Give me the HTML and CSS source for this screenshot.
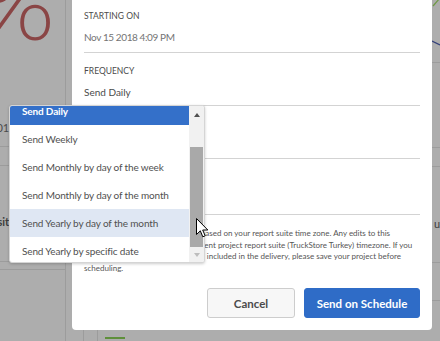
FILE: index.html
```html
<!DOCTYPE html>
<html lang="en">
<head>
    <meta charset="UTF-8">
    <title>Schedule project</title>
    <link rel="stylesheet" href="styles.css">
</head>
<body>

    <!-- page behind the dialog -->
    <div class="backdrop">
        <div class="bg-left">
            <div class="bg-block bg-block-top">
                <div class="bg-percent">%</div>
                <div class="bg-year">2018</div>
            </div>
            <div class="bg-block bg-block-thin"></div>
            <div class="bg-block bg-block-mid">
                <div class="bg-label">Visits</div>
            </div>
            <div class="bg-block bg-block-low"></div>
        </div>
        <div class="bg-main">
            <div class="bg-main-fill"></div>
            <div class="bg-main-foot">
                <div class="bg-col"></div>
                <div class="bg-col"><span class="bg-green"></span></div>
            </div>
        </div>
        <div class="bg-right">
            <div class="bg-chart">
                <svg width="8" height="62" viewBox="0 0 8 62">
                    <path d="M1 6 L8 -2" stroke="#6f9a45" stroke-width="1.2" fill="none"/>
                    <path d="M0 41 L8 45" stroke="#34407a" stroke-width="1.2" fill="none"/>
                </svg>
            </div>
            <div class="bg-cell bg-cell-a"></div>
            <div class="bg-cell bg-cell-b"></div>
            <div class="bg-cell bg-cell-c"><span>ue</span></div>
            <div class="bg-cell bg-cell-d"></div>
        </div>
    </div>

    <!-- dialog -->
    <div class="modal">
        <div class="section">
            <div class="label">Starting on</div>
            <div class="value muted">Nov 15 2018 4:09 PM</div>
        </div>
        <div class="section">
            <div class="label">Frequency</div>
            <div class="value">Send Daily</div>
        </div>
        <div class="section">
            <div class="label">Ending on</div>
            <div class="value">Never</div>
        </div>
        <div class="section section-tall">
            <div class="label">File type</div>
            <div class="value">PDF</div>
        </div>
        <p class="note">
            The scheduled delivery times are based on your report suite time zone. Any edits to this<br>
            schedule times will reflect the current project report suite (TruckStore Turkey) timezone. If you<br>
            want all of your newest edits to be included in the delivery, please save your project before<br>
            scheduling.
        </p>
        <div class="actions">
            <button class="btn btn-cancel">Cancel</button>
            <button class="btn btn-primary">Send on Schedule</button>
        </div>
    </div>

    <!-- open frequency menu -->
    <div class="dropdown">
        <ul class="options">
            <li class="option selected">Send Daily</li>
            <li class="option">Send Weekly</li>
            <li class="option">Send Monthly by day of the week</li>
            <li class="option">Send Monthly by day of the month</li>
            <li class="option hovered">Send Yearly by day of the month</li>
            <li class="option">Send Yearly by specific date</li>
        </ul>
        <div class="scrollbar">
            <div class="scroll-btn scroll-up"><span class="arrow-up"></span></div>
            <div class="scroll-track"><div class="scroll-thumb"></div></div>
            <div class="scroll-btn scroll-down"><span class="arrow-down"></span></div>
        </div>
    </div>

    <svg class="cursor" width="13" height="21" viewBox="0 0 13 21">
        <path d="M0.5 0.5 L0.5 16.5 L4.3 12.8 L6.8 18.8 L9.2 17.8 L6.7 12 L11.8 12 Z" fill="#fff" stroke="#000" stroke-width="1" stroke-linejoin="round"/>
    </svg>

</body>
</html>
```

FILE: styles.css
```css
/* base */
body {
    margin: 0;
    width: 440px;
    height: 341px;
    overflow: hidden;
    position: relative;
    background: #adadad;
    font-family: Lato, "Open Sans", sans-serif;
}

/* page behind the dialog */
.backdrop {
    display: flex;
    height: 341px;
}

.bg-left {
    width: 65px;
    border-right: 1px solid #9c9c9c;
    display: flex;
    flex-direction: column;
}

.bg-block {
    border-bottom: 1px solid #9c9c9c;
    overflow: hidden;
}

.bg-block-top {
    height: 146px;
}

.bg-percent {
    height: 100px;
    margin: -49px 0 0 -23px;
    font-size: 100px;
    font-weight: 300;
    line-height: 100px;
    color: #8a4545;
}

.bg-year {
    margin: 70px 0 0 -10px;
    font-size: 11px;
    color: #4a4a4a;
}

.bg-block-thin {
    height: 18px;
}

.bg-block-mid {
    height: 95px;
}

.bg-label {
    margin: 49px 0 0 -13px;
    font-size: 11px;
    font-weight: bold;
    color: #3d3d3d;
}

.bg-block-low {
    margin-top: 7px;
    border-top: 1px solid #9c9c9c;
    border-bottom: none;
    flex: 1;
}

.bg-main {
    flex: 1;
    display: flex;
    flex-direction: column;
}

.bg-main-fill {
    flex: 1;
}

.bg-main-foot {
    height: 11px;
    display: flex;
    padding-left: 17px;
}

.bg-col {
    width: 13px;
    border-left: 1px solid #9c9c9c;
}

.bg-green {
    display: block;
    width: 20px;
    height: 2px;
    margin: 7px 0 0 7px;
    background: #5e8f3a;
}

.bg-right {
    width: 8px;
    display: flex;
    flex-direction: column;
}

.bg-chart {
    height: 62px;
    border-bottom: 1px solid #9c9c9c;
}

.bg-chart svg {
    display: block;
}

.bg-cell {
    border-bottom: 1px solid #9c9c9c;
    overflow: hidden;
}

.bg-cell-a {
    height: 84px;
}

.bg-cell-b {
    height: 18px;
}

.bg-cell-c {
    height: 95px;
}

.bg-cell-c span {
    display: block;
    margin: 50px 0 0 2px;
    font-size: 11px;
    color: #3d3d3d;
}

.bg-cell-d {
    height: 37px;
}

/* dialog */
.modal {
    position: absolute;
    left: 72px;
    top: 0;
    width: 360px;
    height: 330px;
    box-sizing: border-box;
    padding: 0 12px 12px;
    background: #fff;
    border-radius: 0 0 4px 4px;
    display: flex;
    flex-direction: column;
}

.section {
    padding: 12px 0 5px;
    border-bottom: 1px solid #d3d3d3;
}

.section:first-child {
    padding-top: 10px;
    padding-bottom: 7px;
}

.section-tall {
    padding-bottom: 8px;
}

.label {
    font-size: 8.5px;
    line-height: 12px;
    text-transform: uppercase;
    color: #4b4b4b;
}

.value {
    margin-top: 7px;
    font-size: 10px;
    line-height: 16px;
    color: #4b4b4b;
}

.value.muted {
    color: #747474;
    letter-spacing: -0.4px;
}

.note {
    margin: 13px 0 0;
    font-size: 8px;
    line-height: 11.5px;
    white-space: nowrap;
    color: #555;
}

.actions {
    margin-top: auto;
    display: flex;
    justify-content: flex-end;
    gap: 9px;
}

.btn {
    height: 30px;
    border-radius: 3px;
    font-family: Lato, "Open Sans", sans-serif;
    font-size: 11.5px;
    font-weight: bold;
    cursor: pointer;
}

.btn-cancel {
    width: 88px;
    border: 1px solid #cdcdcd;
    background: #f7f7f7;
    color: #4b4b4b;
}

.btn-primary {
    width: 116px;
    border: 1px solid #2f6cc7;
    background: #2f6cc7;
    color: #fff;
}

/* frequency menu */
.dropdown {
    position: absolute;
    left: 9px;
    top: 105px;
    width: 196px;
    height: 158px;
    box-sizing: border-box;
    display: flex;
    overflow: hidden;
    background: #fff;
    border: 1px solid #d5d5d5;
    border-radius: 3px;
    box-shadow: 0 1px 3px rgba(0, 0, 0, 0.2);
}

.options {
    flex: 1;
    list-style: none;
    margin: -9px 0 0;
    padding: 0;
}

.option {
    height: 28px;
    line-height: 28px;
    padding-left: 12px;
    font-size: 10px;
    letter-spacing: -0.15px;
    color: #505050;
    white-space: nowrap;
}

.option.selected {
    background: #3470c9;
    color: #fff;
    font-weight: bold;
}

.option.hovered {
    background: #dfe7f3;
}

.scrollbar {
    width: 15px;
    background: #f1f1f1;
    display: flex;
    flex-direction: column;
}

.scroll-btn {
    display: flex;
    align-items: center;
    justify-content: center;
}

.scroll-up {
    height: 17px;
}

.scroll-down {
    height: 15px;
}

.arrow-up {
    border-left: 3.5px solid transparent;
    border-right: 3.5px solid transparent;
    border-bottom: 4px solid #505050;
}

.arrow-down {
    border-left: 3.5px solid transparent;
    border-right: 3.5px solid transparent;
    border-top: 4px solid #bdbdbd;
}

.scroll-track {
    flex: 1;
    padding-top: 24px;
}

.scroll-thumb {
    height: 100px;
    margin: 0 1px;
    background: #a9a9a9;
}

.cursor {
    position: absolute;
    left: 196px;
    top: 218px;
}
```
